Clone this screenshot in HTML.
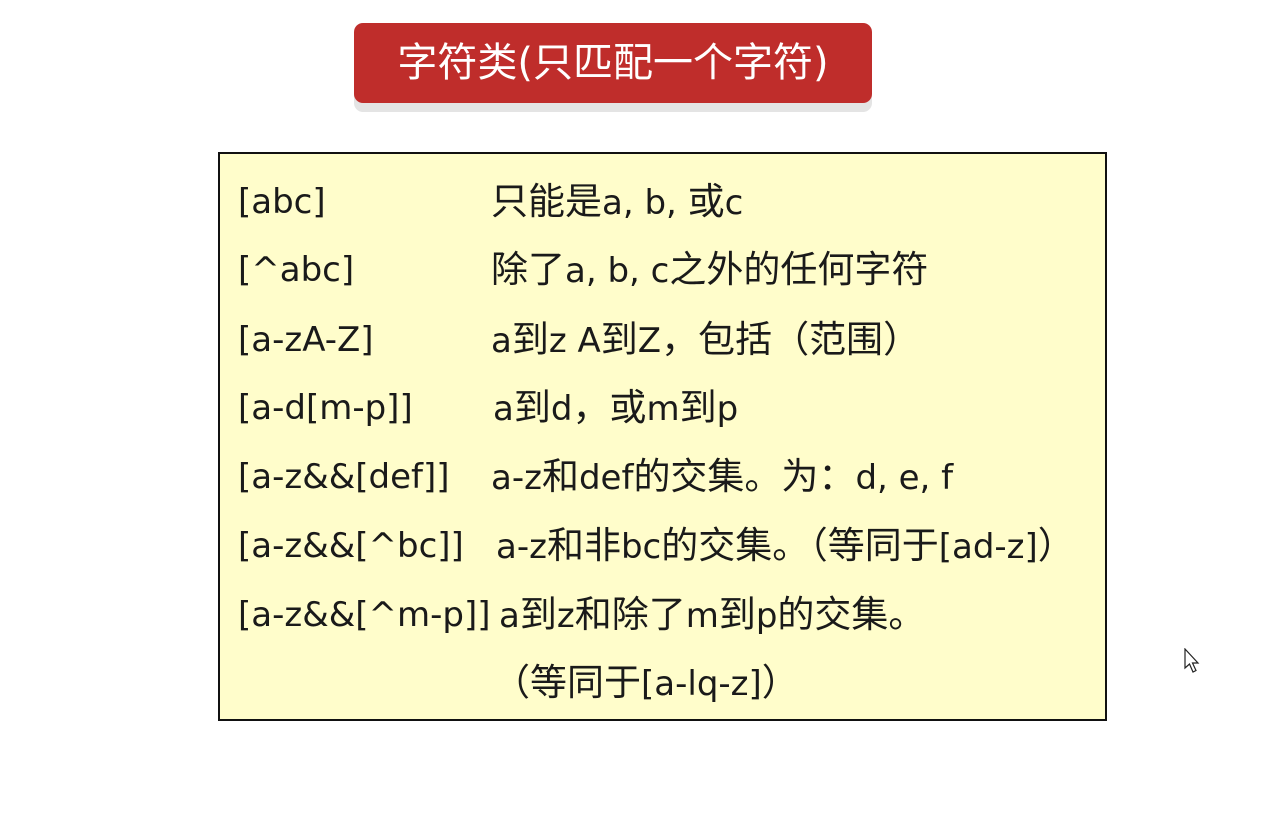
<!DOCTYPE html>
<html><head><meta charset="utf-8"><style>
body{margin:0;width:1281px;height:840px;background:#fff;position:relative;overflow:hidden;font-family:"DejaVu Sans","Noto Sans CJK SC",sans-serif;}
.title{position:absolute;left:354px;top:23px;width:518px;height:80px;background:#bf2d2b;border-radius:9px;box-shadow:0 9px 0 #e4e4e4;color:#fff;font-size:40px;line-height:80px;text-align:center;font-family:"DejaVu Sans","Noto Sans CJK SC",sans-serif;}
.box{position:absolute;left:218px;top:152px;width:885px;height:565px;background:#fffdcb;border:2px solid #111;}
.t{position:absolute;font-size:34px;color:#1a1a1a;white-space:nowrap;line-height:40px;font-family:"DejaVu Sans","Noto Sans CJK SC",sans-serif;}
.t span{font-size:37px}
.t span.p{font-family:"WenQuanYi Zen Hei",sans-serif;}
</style></head><body>
<div class="title">字符类(只匹配一个字符)</div>
<div class="box"></div>
<div class="t" style="left:238px;top:182px">[abc]</div><div class="t" style="left:491px;top:182px"><span>只能是</span>a, b, <span>或</span>c</div>
<div class="t" style="left:238px;top:250px">[^abc]</div><div class="t" style="left:491px;top:250px"><span>除了</span>a, b, c<span>之外的任何字符</span></div>
<div class="t" style="left:238px;top:320px">[a-zA-Z]</div><div class="t" style="left:491px;top:320px">a<span>到</span>z A<span>到</span>Z<span>，包括</span><span class="p">（</span><span>范围</span><span class="p">）</span></div>
<div class="t" style="left:238px;top:388px">[a-d[m-p]]</div><div class="t" style="left:493px;top:388px">a<span>到</span>d<span>，或</span>m<span>到</span>p</div>
<div class="t" style="left:238px;top:457px">[a-z&amp;&amp;[def]]</div><div class="t" style="left:491px;top:457px">a-z<span>和</span>def<span>的交集。为：</span>d, e, f</div>
<div class="t" style="left:238px;top:526px">[a-z&amp;&amp;[^bc]]</div><div class="t" style="left:496px;top:526px">a-z<span>和非</span>bc<span>的交集。</span><span class="p">（</span><span>等同于</span>[ad-z]<span class="p">）</span></div>
<div class="t" style="left:238px;top:595px">[a-z&amp;&amp;[^m-p]]</div><div class="t" style="left:499px;top:595px">a<span>到</span>z<span>和除了</span>m<span>到</span>p<span>的交集。</span></div>
<div class="t" style="left:493px;top:663px"><span class="p">（</span><span>等同于</span>[a-lq-z]<span class="p">）</span></div>
<svg style="position:absolute;left:1184px;top:648px" width="16" height="26" viewBox="0 0 16 26"><path d="M1 1 L1 20 L5.5 16 L9 24 L12 22.5 L8.5 15 L14 15 Z" fill="#fff" stroke="#222" stroke-width="1.2"/></svg>
</body></html>
